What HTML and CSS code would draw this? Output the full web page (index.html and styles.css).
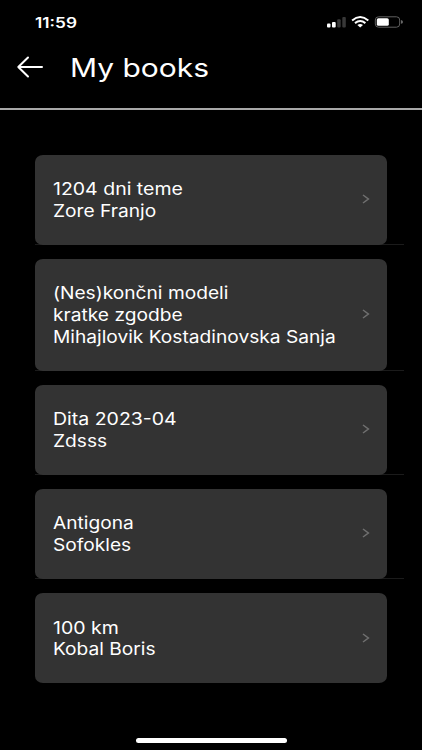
FILE: index.html
```html
<!DOCTYPE html>
<html lang="sl">
<head>
<meta charset="utf-8">
<title>My books</title>
<link rel="stylesheet" href="styles.css">
</head>
<body>
<div class="status">
  <span class="time">11:59</span>
  <svg class="status-icons" width="80" height="16" viewBox="0 0 80 16">
    <g fill="#fff"><rect x="1" y="9.5" width="3.5" height="4" rx="1"/><rect x="6" y="7.9" width="3.7" height="5.6" rx="1"/></g>
    <g fill="#383838"><rect x="11.2" y="5.2" width="3.5" height="8.3" rx="1"/><rect x="16.3" y="2.9" width="3.5" height="10.6" rx="1"/></g>
    <g fill="none" stroke="#fff" stroke-width="2"><path d="M26.1 6.4Q34.2-.4 42.3 6.4"/><path d="M29 9.1Q34.2 5 39.4 9.1"/></g>
    <path d="M31.4 11.1Q34.2 9 37 11.1L34.2 13.4Z" fill="#fff"/>
    <rect x="49.3" y="2.8" width="24.4" height="10.4" rx="3.2" fill="none" stroke="#606060"/>
    <rect x="50.8" y="4.2" width="12" height="7.6" rx="1.6" fill="#fff"/>
    <path d="M75 6Q77 6.5 77 7.9T75 9.8Z" fill="#686868"/>
  </svg>
</div>
<header class="header">
  <svg class="back" width="28" height="24" viewBox="0 0 28 24" fill="none" stroke="#fff" stroke-width="2" stroke-linecap="round" stroke-linejoin="round"><path d="M26 12H2.3M12 2.5L2.3 12L12 21.5"/></svg>
  <h1 class="title">My books</h1>
</header>
<main class="list">
  <div class="row"><div class="card"><p class="text"><span class="line numeric">1204 dni teme</span><span class="line">Zore Franjo</span></p><svg class="chevron" width="8" height="10" viewBox="0 0 8 10"><path d="M1 1L6.4 5L1 9"/></svg></div></div>
  <div class="row"><div class="card tall"><p class="text"><span class="line">(Nes)končni modeli</span><span class="line">kratke zgodbe</span><span class="line">Mihajlovik Kostadinovska Sanja</span></p><svg class="chevron" width="8" height="10" viewBox="0 0 8 10"><path d="M1 1L6.4 5L1 9"/></svg></div></div>
  <div class="row"><div class="card"><p class="text"><span class="line numeric">Dita 2023-04</span><span class="line">Zdsss</span></p><svg class="chevron" width="8" height="10" viewBox="0 0 8 10"><path d="M1 1L6.4 5L1 9"/></svg></div></div>
  <div class="row"><div class="card"><p class="text"><span class="line">Antigona</span><span class="line">Sofokles</span></p><svg class="chevron" width="8" height="10" viewBox="0 0 8 10"><path d="M1 1L6.4 5L1 9"/></svg></div></div>
  <div class="row"><div class="card"><p class="text"><span class="line numeric">100 km</span><span class="line">Kobal Boris</span></p><svg class="chevron" width="8" height="10" viewBox="0 0 8 10"><path d="M1 1L6.4 5L1 9"/></svg></div></div>
</main>
<div class="home"></div>
</body>
</html>
```
FILE: styles.css
```css
* { box-sizing: border-box; margin: 0; padding: 0; }
body {
  width: 422px;
  height: 750px;
  overflow: hidden;
  display: flex;
  flex-direction: column;
  background: #000;
  color: #fff;
  font-family: Inter, "Liberation Sans", sans-serif;
}
svg { display: block; flex: none; }
.status {
  height: 45px;
  padding: 14px 16px 0 35px;
  display: flex;
  justify-content: space-between;
}
.time {
  font-size: 14px;
  line-height: 17px;
  font-weight: 600;
  transform: scaleX(1.23);
  transform-origin: left;
}
.header {
  height: 65px;
  padding: 1.6px 17px 21px 16px;
  display: flex;
  align-items: center;
  border-bottom: 2px solid #a8a8a8;
}
.title {
  margin: 3px 0 0 25.5px;
  font-size: 25.5px;
  line-height: 32px;
  font-weight: 400;
  white-space: nowrap;
  transform: scaleX(1.175);
  transform-origin: left;
}
.list { padding: 44.7px 18px 0 35px; }
.row { margin-bottom: 14.2px; border-bottom: 1px solid #1b1b1b; }
.row:last-child { border-bottom: 0; }
.card {
  width: 352px;
  height: 90px;
  margin-bottom: -1px;
  padding: 0 17.3px 0 17.5px;
  display: flex;
  align-items: center;
  justify-content: space-between;
  position: relative;
  border-radius: 8px / 7px;
  background: #333;
}
.tall { height: 111.7px; }
.text { padding-top: 2.2px; }
.line {
  display: block;
  font-size: 17px;
  line-height: 21.6px;
  white-space: nowrap;
  transform: scaleX(1.127);
  transform-origin: left;
}
.numeric { transform: scaleX(1.147); }
.chevron { margin-bottom: 1px; fill: none; stroke: #707070; stroke-width: 1.5; }
.home {
  width: 151px;
  height: 5px;
  margin: auto auto 7px 136px;
  border-radius: 3px;
  background: #fff;
}
```
